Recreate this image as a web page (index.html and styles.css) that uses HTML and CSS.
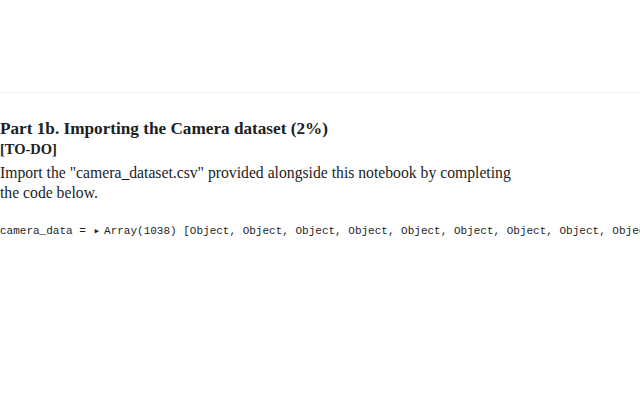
FILE: index.html
```html
<!DOCTYPE html>
<html>
<head>
<meta charset="utf-8">
<link rel="stylesheet" href="styles.css">
</head>
<body>
<div class="top"></div>
<div class="cell">
  <h2 class="title">Part 1b. Importing the Camera dataset (2%)</h2>
  <div class="todo">[TO-DO]</div>
  <p class="desc">Import the "camera_dataset.csv" provided alongside this notebook by completing<br>the code below.</p>
</div>
<div class="code"><span class="var">camera_data = </span><span class="tri">&#9656;</span>Array(1038) [Object, Object, Object, Object, Object, Object, Object, Object, Object, Object, Object]</div>
</body>
</html>
```
FILE: styles.css
```css
html, body { margin: 0; padding: 0; background: #fff; }
body { width: 640px; height: 400px; overflow: hidden; color: #1b1e23; }
.top { height: 92px; border-bottom: 1px solid #f1f1f1; }
.cell { padding-top: 26px; font-family: "Liberation Serif", serif; }
.title { margin: 0; font-size: 17.2px; font-weight: bold; line-height: 20px; }
.todo { font-size: 14.5px; font-weight: bold; line-height: 20px; }
.desc { margin: 4px 0 0; font-size: 15.7px; line-height: 20px; }
.code { margin-top: 20px; font-family: "Liberation Mono", monospace; font-size: 11px; line-height: 16px; white-space: nowrap; }
.tri { font-size: 11px; margin: 0 4px 0 1px; }
```
